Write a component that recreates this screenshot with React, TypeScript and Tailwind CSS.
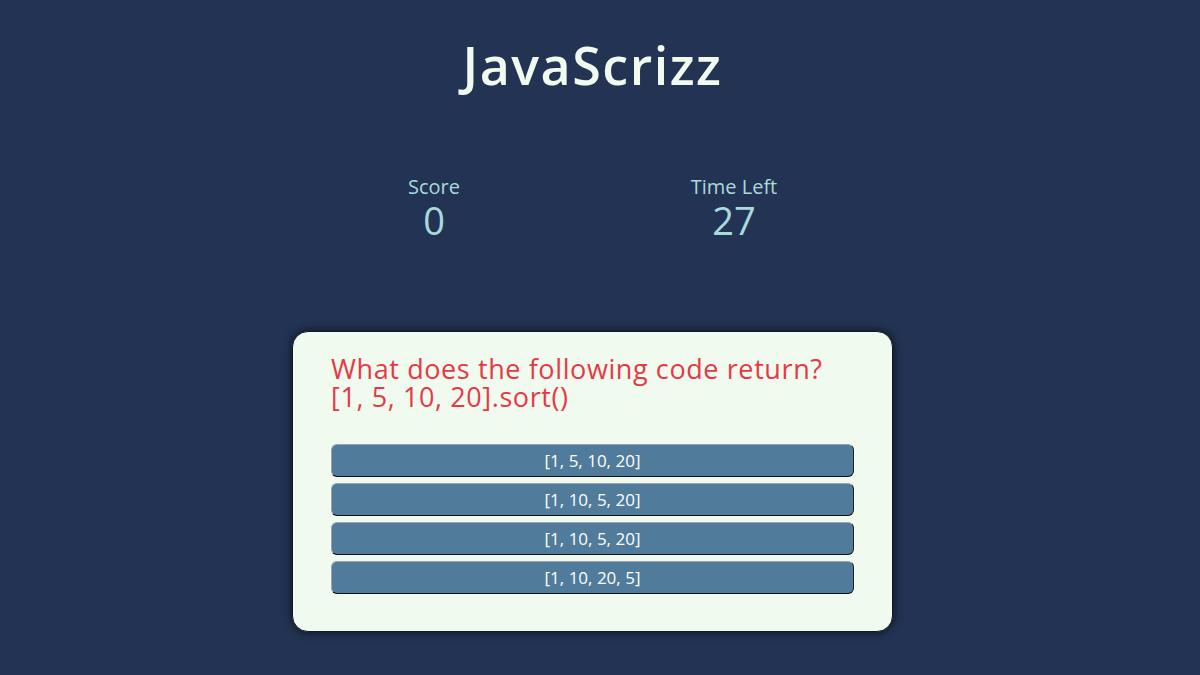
import React from 'react';

const options = ['[1, 5, 10, 20]', '[1, 10, 5, 20]', '[1, 10, 5, 20]', '[1, 10, 20, 5]'];

export default function App() {
  return (
    <div className="min-h-[675px] bg-[#223353] font-['Open_Sans',sans-serif]">
      <div className="w-[1185px] flex flex-col items-center">
        <h1 className="mt-[34px] text-[52px] leading-[62px] font-semibold text-[#f1faee] tracking-[1.5px]">JavaScrizz</h1>

        <div className="mt-[78px] flex">
          <div className="w-[300px] flex flex-col items-center text-[#a8dadc]">
            <div className="text-[20px] leading-[26px]">Score</div>
            <div className="text-[38px] leading-[40px]">0</div>
          </div>
          <div className="w-[300px] flex flex-col items-center text-[#a8dadc]">
            <div className="text-[20px] leading-[26px]">Time Left</div>
            <div className="text-[38px] leading-[40px]">27</div>
          </div>
          <div className="w-[17px]" />
        </div>

        <div className="mt-[91px] w-[601px] rounded-[16px] border border-[#111827] bg-[#f1faee] shadow-[0_0_10px_rgba(0,0,0,0.7)] px-[38px] pt-[23px] pb-[37px]">
          <div className="text-[27px] leading-[28px] tracking-[0.6px] text-[#e63946]">
            <div>What does the following code return?</div>
            <div>[1, 5, 10, 20].sort()</div>
          </div>
          <div className="mt-[33px] flex flex-col gap-[6px]">
            {options.map((o, i) => (
              <button
                key={i}
                className="h-[33px] w-full rounded-[6px] border border-t-[#9ca3af] border-l-[#9ca3af] border-r-[#222] border-b-[#111] bg-[#507b9b] text-[17px] text-white"
              >
                {o}
              </button>
            ))}
          </div>
        </div>
      </div>
    </div>
  );
}
